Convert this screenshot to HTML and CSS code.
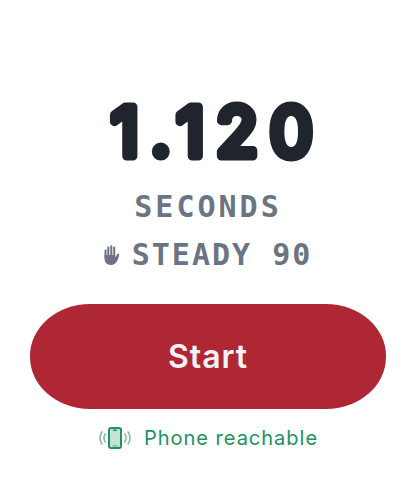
FILE: index.html
```html
<!DOCTYPE html>
<html lang="en">
<head>
  <meta charset="UTF-8">
  <meta name="viewport" content="width=device-width, initial-scale=1">
  <title>Timer</title>
  <link rel="stylesheet" href="styles.css">
</head>
<body>

  <main class="timer">
    <svg class="time" viewBox="0 0 240 96">
      <text x="130" y="72">1.120</text>
    </svg>
    <div class="unit">SECONDS</div>

    <div class="steady">
      <svg class="hand" viewBox="0 0 16 20" aria-hidden="true">
        <g fill="none" stroke="currentColor" stroke-width="2" stroke-linecap="round">
          <path d="M1.5 5.5V12M4.3 2.5V12M7.3 1.3V12M10.2 2.5V12M11.5 14L14.3 9.5"/>
        </g>
        <path fill="currentColor" d="M.5 10H11.2V13L15 10C14.3 14 12.5 20 7 20C2.5 20 .5 17 .5 13Z"/>
      </svg>
      <span>STEADY 90</span>
    </div>

    <button class="start" type="button">Start</button>

    <div class="status">
      <svg class="phone" viewBox="0 0 34 24" aria-hidden="true">
        <rect x="11" y="2" width="12" height="20" rx="2" fill="#c5e3d6" stroke="#239064" stroke-width="2"/>
        <path d="M15.5 4.2h3" stroke="#239064" stroke-width="1.4" stroke-linecap="round"/>
        <path d="M14.5 19.8h5" stroke="#5fae8d" stroke-width="1"/>
        <g fill="none" stroke="#84bfa5" stroke-width="1.6" stroke-linecap="round">
          <path d="M7.2 8Q4.8 12 7.2 16M3.9 6Q.1 12 3.9 18"/>
          <path d="M26.8 8Q29.2 12 26.8 16M30.1 6Q33.9 12 30.1 18"/>
        </g>
      </svg>
      <span>Phone reachable</span>
    </div>
  </main>

</body>
</html>
```

FILE: styles.css
```css
* { box-sizing: border-box; margin: 0; padding: 0; }

body {
  font-family: Inter, sans-serif;
  background: #fff;
  color: #20242c;
}

.timer {
  display: flex;
  flex-direction: column;
  align-items: center;
  padding: 84px 30px 32px;
}

.time {
  width: 240px;
  height: 96px;
}

/* the round stroke thickens the digits and softens their ends */
.time text {
  font-size: 68px;
  font-weight: 400;
  letter-spacing: 12px;
  text-anchor: middle;
  fill: #20242c;
  stroke: #20242c;
  stroke-width: 9px;
  stroke-linejoin: round;
}

.unit,
.steady {
  font-family: "DejaVu Sans Mono", monospace;
  font-size: 30px;
  font-weight: 700;
  line-height: 48px;
  color: #6b7483;
}

.unit {
  margin-top: 3px;
  letter-spacing: 3px;
}

.steady {
  display: flex;
  align-items: center;
  gap: 12px;
  letter-spacing: 2px;
}

.hand {
  width: 16px;
  height: 20px;
}

.start {
  width: 100%;
  margin-top: 25px;
  padding: 32px;
  border: none;
  border-radius: 60px / 52px;
  background: #af2735;
  color: #f4f4f8;
  font-family: inherit;
  font-size: 32px;
  font-weight: 600;
  line-height: 41px;
  letter-spacing: 1px;
  cursor: pointer;
}

.status {
  display: flex;
  align-items: center;
  gap: 12px;
  margin-top: 15px;
  font-size: 20px;
  font-weight: 400;
  line-height: 28px;
  letter-spacing: 1px;
  color: #239064;
}

.phone {
  width: 34px;
  height: 24px;
}
```
